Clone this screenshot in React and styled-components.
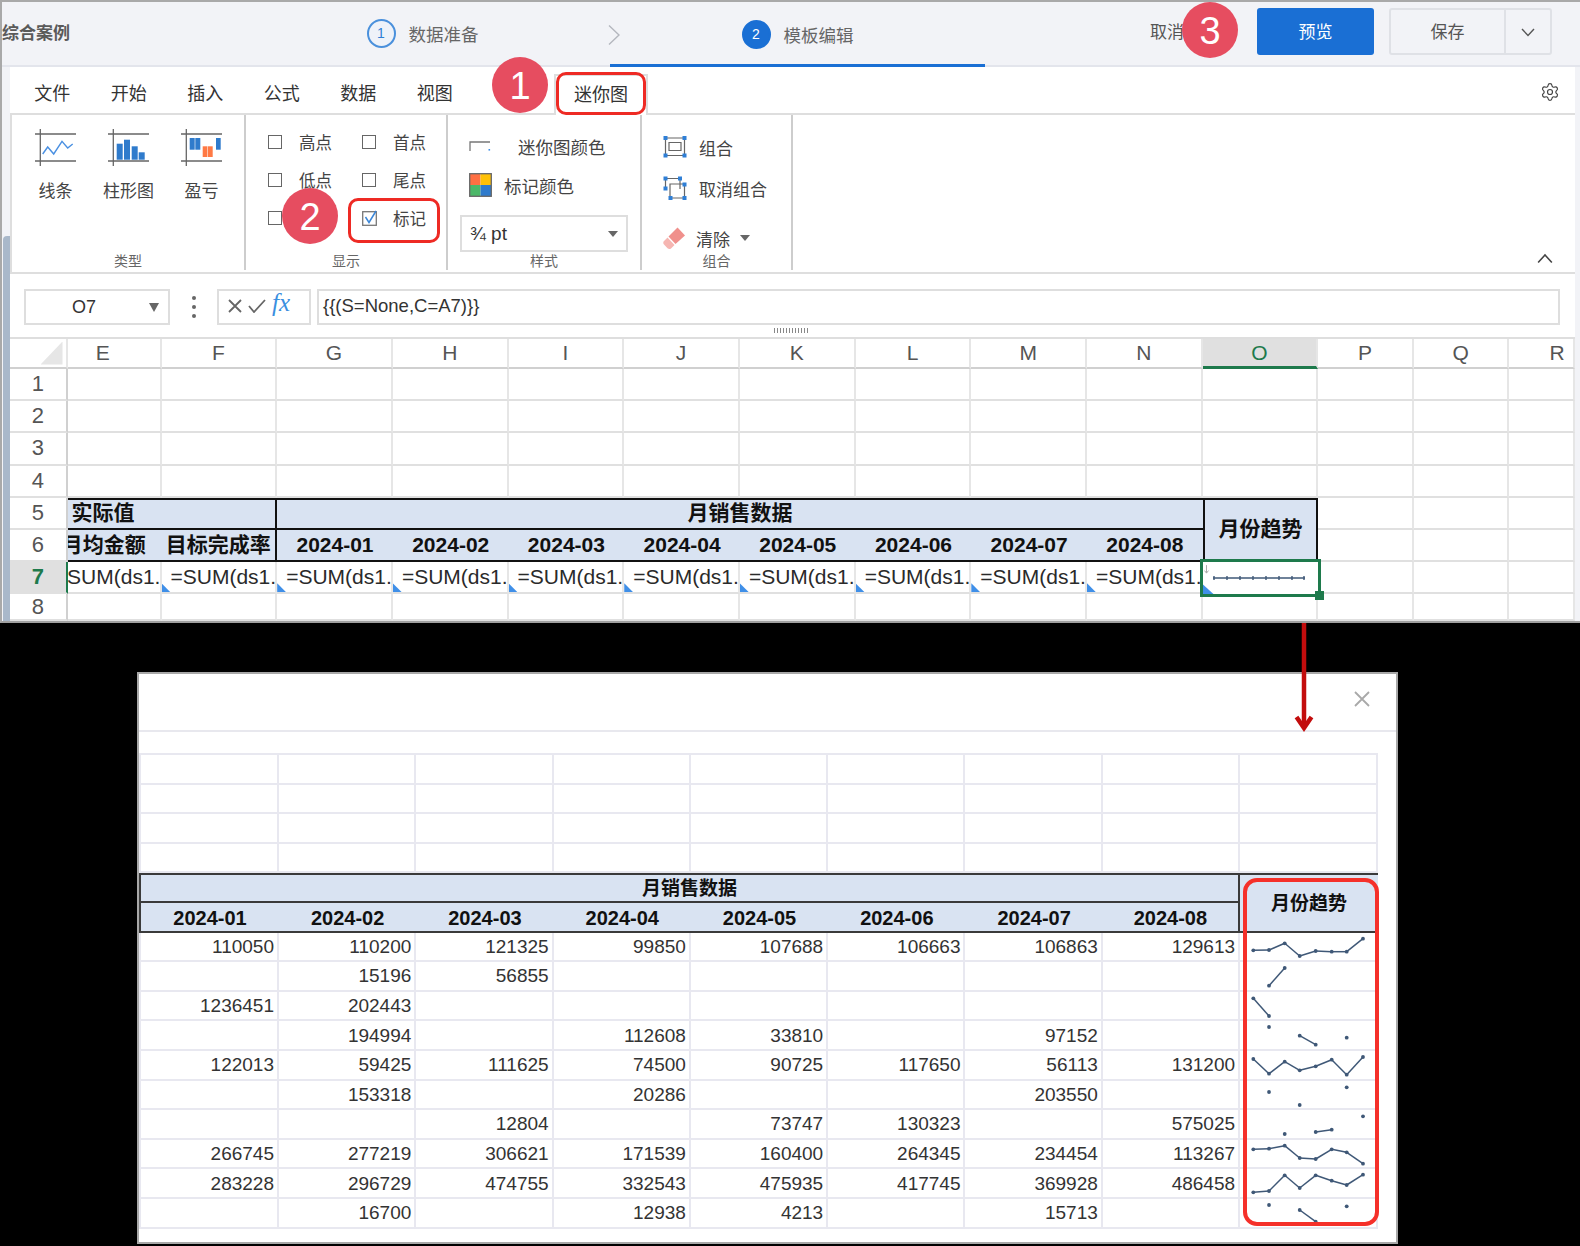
import React from 'react'
import styled, { createGlobalStyle } from 'styled-components'
import { Settings } from 'lucide-react'

const GlobalStyle = createGlobalStyle`
  html, body {
    margin: 0;
    padding: 0;
    background: #000;
  }
  * {
    box-sizing: border-box;
  }
  body {
    font-family: 'Liberation Sans', 'Noto Sans CJK SC', sans-serif;
  }
`

const Screen = styled.div`
  position: relative;
  width: 1580px;
  height: 1246px;
  background: #000;
  overflow: hidden;
  display: flex;
  flex-direction: column;
`

const Editor = styled.div`
  height: 623px;
  flex: none;
  display: flex;
  flex-direction: column;
  background: #f2f3f7;
  border-top: 2px solid #a9a9a9;
  border-left: 2px solid #a9a9a9;
  border-bottom: 2px solid #a0a0a0;
`

/* page header with the wizard steps */
const Header = styled.div`
  height: 65px;
  flex: none;
  display: flex;
  border-bottom: 2px solid #e3e5ec;
`
const Title = styled.div`
  width: 233px;
  flex: none;
  padding-top: 17px;
  font-size: 17px;
  font-weight: 700;
  color: #5a5a5a;
  white-space: nowrap;
`
const Step = styled.div`
  width: 375px;
  flex: none;
  display: flex;
  align-items: center;
  justify-content: center;
  gap: 13px;
  padding-top: 2px;
  margin-bottom: ${p => (p.$active ? '-2px' : '0')};
  border-bottom: 3px solid ${p => (p.$active ? '#1a6fd4' : 'transparent')};
  font-size: 17.5px;
  color: #666;
`
const StepNum = styled.span`
  width: 29px;
  height: 29px;
  border-radius: 50%;
  display: flex;
  align-items: center;
  justify-content: center;
  font-size: 14px;
  color: ${p => (p.$active ? '#fff' : '#2f7fd6')};
  background: ${p => (p.$active ? '#1a6fd4' : '#eef2f9')};
  border: 2px solid ${p => (p.$active ? '#1a6fd4' : '#4a90dc')};
`
const StepArrow = styled.svg`
  flex: none;
  width: 12px;
  height: 20px;
  margin: 23px -10px 0 -2px;
  fill: none;
  stroke: #b4b7be;
  stroke-width: 1.4;
`
const Actions = styled.div`
  margin-left: auto;
  margin-right: 28px;
  margin-top: 6px;
  display: flex;
  align-items: flex-start;
`
const CancelLink = styled.span`
  margin-top: 10px;
  margin-right: 73px;
  font-size: 17px;
  color: #555;
`
const PreviewButton = styled.button`
  width: 117px;
  height: 47px;
  margin-right: 15px;
  padding: 0 0 2px;
  border: 0;
  border-radius: 3px;
  background: #1a6fd4;
  color: #fff;
  font: inherit;
  font-size: 17px;
`
const SaveButton = styled.div`
  width: 163px;
  height: 47px;
  display: flex;
  border: 2px solid #dfe1e6;
  border-radius: 3px;
  font-size: 17px;
  color: #555;
`
const SaveLabel = styled.span`
  width: 115px;
  display: flex;
  align-items: center;
  justify-content: center;
  padding-bottom: 2px;
  border-right: 2px solid #dfe1e6;
`
const SaveCaret = styled.span`
  flex: 1;
  display: flex;
  align-items: center;
  justify-content: center;
`

/* ribbon */
const Workspace = styled.div`
  flex: 1;
  min-height: 0;
  display: flex;
  padding-right: 5px;
`
const LeftRail = styled.div`
  width: 8px;
  flex: none;
  padding-top: 169px;
`
const RailThumb = styled.div`
  height: 100%;
  margin-left: 1px;
  background: #a9b8ca;
  border-radius: 4px 0 0 0;
`
const Content = styled.div`
  flex: 1;
  min-width: 0;
  display: flex;
  flex-direction: column;
  background: #fff;
`
const TabRow = styled.div`
  height: 48px;
  flex: none;
  display: flex;
  align-items: center;
  padding: 3px 15px 0 4px;
  border-bottom: 2px solid #dedede;
`
const Tab = styled.span`
  width: 76.5px;
  text-align: center;
  font-size: 18px;
  color: #333;
`
const ActiveTab = styled.span`
  align-self: flex-end;
  width: 94px;
  height: 41px;
  margin-left: 81px;
  margin-bottom: -2px;
  padding-top: 4px;
  text-align: center;
  font-size: 18px;
  color: #333;
  background: #fff;
  border: 2px solid #dedede;
  border-bottom: 0;
`
const GearWrap = styled.span`
  margin-left: auto;
  display: flex;
  color: #444;
`
const RibbonBody = styled.div`
  height: 159px;
  flex: none;
  display: flex;
  border-left: 2px solid #dedede;
  border-bottom: 2px solid #dedede;
`
const Group = styled.div`
  width: ${p => p.$w}px;
  height: 155px;
  flex: none;
  display: flex;
  flex-direction: column;
  border-right: 2px solid #cdcdcd;
`
const GroupBody = styled.div`
  flex: 1;
  min-height: 0;
`
const GroupLabel = styled.div`
  height: 20px;
  flex: none;
  text-align: center;
  font-size: 14px;
  line-height: 22px;
  color: #666;
`
const ChartTypes = styled(GroupBody)`
  display: flex;
  padding: 14px 0 0 7px;
`
const ChartType = styled.div`
  width: 73px;
  display: flex;
  flex-direction: column;
  align-items: center;
  gap: 14px;
  font-size: 17px;
  line-height: 22px;
  color: #444;
`
const ChartIcon = styled.svg`
  width: 42px;
  height: 38px;
  fill: none;
`
const CheckGrid = styled(GroupBody)`
  display: grid;
  grid-template-columns: 94px 94px;
  grid-auto-rows: 38px;
  padding: 8px 0 0 22px;
`
const CheckItem = styled.label`
  display: flex;
  align-items: center;
  gap: 17px;
  font-size: 16.5px;
  color: #444;
`
const Box = styled.span`
  width: 14px;
  height: 14px;
  flex: none;
  border: 1.5px solid #666;
`
const TickBox = styled.svg`
  width: 18px;
  height: 16px;
  flex: none;
  margin-right: -4px;
  fill: none;
`
const StyleBody = styled(GroupBody)`
  padding-top: 19px;
  font-size: 17.5px;
  color: #444;
`
const StyleRow = styled.div`
  height: 24px;
  display: flex;
  align-items: center;
  gap: ${p => p.$gap}px;
  padding-left: 21px;
  margin-bottom: 15px;
`
const StyleSelect = styled.div`
  width: 168px;
  height: 37px;
  margin: 18px 0 0 12px;
  display: flex;
  align-items: center;
  justify-content: space-between;
  padding: 0 8px;
  background: #fff;
  border: 2px solid #dedede;
  font-size: 19px;
  color: #333;
`
const Caret = styled.span`
  flex: none;
  width: 0;
  height: 0;
  border-left: ${p => p.$w || 5}px solid transparent;
  border-right: ${p => p.$w || 5}px solid transparent;
  border-top: ${p => p.$h || 6}px solid #666;
`
const ComboBody = styled(GroupBody)`
  padding: 20px 0 0 21px;
  font-size: 17px;
  color: #444;
`
const ComboRow = styled.div`
  height: 24px;
  display: flex;
  align-items: center;
  gap: 12px;
  margin-bottom: ${p => p.$mb}px;
`
const ClearRow = styled(ComboRow)`
  margin-top: 26px;
  margin-left: -1px;
  gap: 10px;
`
const ComboIcon = styled.svg`
  width: 24px;
  height: 24px;
  flex: none;
  fill: none;
`
const Collapse = styled.div`
  flex: 1;
  display: flex;
  align-items: flex-end;
  justify-content: flex-end;
  padding: 0 22px 5px 0;
`

/* formula bar */
const FormulaBar = styled.div`
  height: 65px;
  flex: none;
  padding: 15px 15px 0 14px;
  border-bottom: 2px solid #dedede;
`
const FormulaRow = styled.div`
  height: 36px;
  display: flex;
  align-items: stretch;
`
const NameBox = styled.div`
  width: 146px;
  flex: none;
  display: flex;
  align-items: center;
  padding: 0 9px 0 46px;
  justify-content: space-between;
  border: 2px solid #dedede;
  font-size: 18px;
  color: #333;
`
const DotsHandle = styled.div`
  width: 47px;
  flex: none;
  display: flex;
  flex-direction: column;
  align-items: center;
  justify-content: center;
  gap: 5px;
`
const Dot = styled.span`
  width: 4px;
  height: 4px;
  border-radius: 50%;
  background: #666;
`
const FxBox = styled.div`
  width: 94px;
  flex: none;
  margin-right: 6px;
  display: flex;
  align-items: center;
  gap: 6px;
  padding: 0 0 3px 9px;
  border: 2px solid #dedede;
`
const FxGlyph = styled.span`
  font-family: 'Liberation Serif', serif;
  font-style: italic;
  font-size: 25px;
  line-height: 1;
  margin-top: -6px;
  color: #3a8fe0;
`
const FormulaInput = styled.div`
  flex: 1;
  display: flex;
  align-items: center;
  padding: 0 0 2px 4px;
  border: 2px solid #dedede;
  font-size: 18.5px;
  color: #333;
`
const Grip = styled.div`
  width: 36px;
  height: 5px;
  margin: 3px auto 0;
  background: repeating-linear-gradient(90deg, #888 0 1.5px, transparent 1.5px 3px);
`

/* top spreadsheet */
const Sheet = styled.div`
  flex: 1;
  min-height: 0;
  display: grid;
  grid-template-columns: 57.5px 94px repeat(10, 115.7px) 95.5px 95.5px 1fr;
  grid-template-rows: 30px repeat(7, 32.2px) 1fr;
  overflow: hidden;
`
const Cell = styled.div`
  min-width: 0;
  position: relative;
  display: flex;
  align-items: center;
  overflow: hidden;
  white-space: nowrap;
  border-right: 2px solid #e6e6e6;
  border-bottom: 2px solid #e0e0e0;
  font-size: 21px;
  color: #2a2a2a;
`
const ColHead = styled(Cell)`
  justify-content: center;
  font-size: 21px;
  color: ${p => (p.$on ? '#1e7a4c' : '#555')};
  background: ${p => (p.$on ? '#e0e0e0' : '#fff')};
  border-bottom: ${p => (p.$on ? '3px solid #1e7a4c' : '2px solid #d0d0d0')};
`
const CornerCell = styled(ColHead)`
  justify-content: flex-end;
  padding-right: 3px;
  &::after {
    content: '';
    width: 22px;
    height: 23px;
    background: #e6e6e6;
    clip-path: polygon(100% 0, 100% 100%, 0 100%);
  }
`
const RowHead = styled(Cell)`
  justify-content: center;
  font-size: 22px;
  font-weight: ${p => (p.$on ? 700 : 400)};
  color: ${p => (p.$on ? '#1e7a4c' : '#555')};
  background: ${p => (p.$on ? '#e0e0e0' : '#fff')};
  border-right: 2px solid ${p => (p.$on ? '#1e7a4c' : '#d0d0d0')};
`
const HeadCell = styled(Cell)`
  justify-content: ${p => (p.$left ? 'flex-start' : 'center')};
  padding-left: ${p => (p.$left ? '4px' : '0')};
  padding-bottom: ${p => p.$lift || 0}px;
  grid-column: span ${p => p.$span || 1};
  grid-row: span ${p => p.$rows || 1};
  background: #d9e3f2;
  font-weight: 700;
  color: #111;
  border-top: ${p => (p.$top ? '2px solid #111' : '0')};
  border-bottom: 2px solid #111;
  border-right: ${p => (p.$edge ? '2px solid #111' : '0')};
`
const TrendHead = styled(HeadCell)`
  border-left: 2px solid #111;
`
const ClippedText = styled.span`
  flex: none;
  width: 115.7px;
  margin-left: -21.7px;
  padding-left: ${p => (p.$left ? '9px' : '0')};
  text-align: ${p => (p.$left ? 'left' : 'center')};
`
const LastColLabel = styled.span`
  flex: none;
  width: 95.5px;
  text-align: center;
`
const LastColHead = styled(ColHead)`
  justify-content: flex-start;
`
const FormulaCell = styled(Cell)`
  padding-left: 9px;
  &::after {
    content: '';
    position: absolute;
    left: 0;
    bottom: 0;
    width: 9px;
    height: 9px;
    background: #3f8fe8;
    clip-path: polygon(0 0, 100% 100%, 0 100%);
  }
`
const SelectedCell = styled.div`
  position: relative;
  z-index: 2;
`
const Selection = styled.div`
  position: absolute;
  top: -3px;
  left: -3px;
  right: -3px;
  bottom: -3px;
  border: 3px solid #1e7a4c;
  &::after {
    content: '';
    position: absolute;
    right: -6px;
    bottom: -6px;
    width: 9px;
    height: 9px;
    background: #1e7a4c;
  }
  &::before {
    content: '';
    position: absolute;
    left: 0;
    bottom: 0;
    width: 11px;
    height: 10px;
    background: #3f8fe8;
    clip-path: polygon(0 0, 100% 100%, 0 100%);
  }
`
const SelectionSpark = styled.svg`
  display: block;
  width: 100%;
  height: 100%;
  fill: none;
`

/* preview dialog on the black backdrop */
const Backdrop = styled.div`
  flex: 1;
  min-height: 0;
  padding: 49px 0 0 137px;
`
const Dialog = styled.div`
  width: 1261px;
  height: 572px;
  background: #fff;
  border: 2px solid #a8a8a8;
`
const DialogHead = styled.div`
  height: 58px;
  display: flex;
  align-items: center;
  justify-content: flex-end;
  padding: 0 26px 6px 0;
  border-bottom: 2px solid #e8e8ee;
`
const CloseIcon = styled.svg`
  width: 16px;
  height: 16px;
  fill: none;
  stroke: #a9a9a9;
  stroke-width: 1.8;
`
const PreviewGrid = styled.div`
  position: relative;
  width: 1239px;
  margin-top: 21px;
  border-top: 2px solid #e8e8f0;
  display: grid;
  grid-template-columns: 140px repeat(7, 137.3px) 138px;
  grid-auto-rows: 29.6px;
`
const PCell = styled.div`
  min-width: 0;
  display: flex;
  align-items: center;
  justify-content: flex-end;
  padding: 1px 3px 0 0;
  white-space: nowrap;
  overflow: hidden;
  border-right: 2px solid #e8e8f0;
  border-bottom: 2px solid #e8e8f0;
  border-left: ${p => (p.$first ? '2px solid #e8e8f0' : '0')};
  font-size: 19px;
  color: #333;
`
const SparkCell = styled(PCell)`
  padding: 0;
  align-items: flex-start;
  justify-content: flex-start;
`
const PHead = styled.div`
  grid-column: span ${p => p.$span || 1};
  grid-row: span ${p => p.$rows || 1};
  display: flex;
  align-items: center;
  justify-content: center;
  background: #d9e3f2;
  padding-top: ${p => (p.$date ? 3 : 0)}px;
  padding-bottom: ${p => (p.$lift ? p.$lift : 0)}px;
  font-size: ${p => (p.$date ? 20 : 19)}px;
  font-weight: 700;
  color: #111;
  border-top: ${p => (p.$top ? '2px solid #3a3a3a' : '0')};
  border-bottom: 2px solid #3a3a3a;
  border-left: ${p => (p.$first ? '2px solid #3a3a3a' : '0')};
  border-right: ${p => (p.$edge ? '2px solid #3a3a3a' : '0')};
`
const Spark = styled.svg`
  display: block;
  flex: none;
  width: 136px;
  height: 27.6px;
`

/* annotations laid over the screenshot */
const Badge = styled.div`
  position: absolute;
  left: ${p => p.$x - 28}px;
  top: ${p => p.$y - 28}px;
  width: 56px;
  height: 56px;
  z-index: 5;
  padding-top: 2px;
  border-radius: 50%;
  display: flex;
  align-items: center;
  justify-content: center;
  background: #e64d60;
  color: #fff;
  font-size: 38px;
`
const RedBox = styled.div`
  position: absolute;
  left: ${p => p.$x}px;
  top: ${p => p.$y}px;
  width: ${p => p.$w}px;
  height: ${p => p.$h}px;
  z-index: 4;
  border: 3.5px solid #ee2a24;
  border-radius: 10px;
`
const TrendBox = styled.div`
  position: absolute;
  left: 1104px;
  top: 123px;
  width: 136px;
  height: 348px;
  border: 4px solid #f5302a;
  border-radius: 14px;
`
const FlowArrow = styled.svg`
  position: absolute;
  left: 1294px;
  top: 623px;
  width: 20px;
  height: 110px;
  z-index: 4;
  fill: none;
  stroke: #c30d0d;
  stroke-width: 4.5;
`

const COLS = ['E', 'F', 'G', 'H', 'I', 'J', 'K', 'L', 'M', 'N', 'O', 'P', 'Q', 'R']
const MONTHS = ['2024-01', '2024-02', '2024-03', '2024-04', '2024-05', '2024-06', '2024-07', '2024-08']

const ROWS = [
  [110050, 110200, 121325, 99850, 107688, 106663, 106863, 129613],
  [null, 15196, 56855, null, null, null, null, null],
  [1236451, 202443, null, null, null, null, null, null],
  [null, 194994, null, 112608, 33810, null, 97152, null],
  [122013, 59425, 111625, 74500, 90725, 117650, 56113, 131200],
  [null, 153318, null, 20286, null, null, 203550, null],
  [null, null, 12804, null, 73747, 130323, null, 575025],
  [266745, 277219, 306621, 171539, 160400, 264345, 234454, 113267],
  [283228, 296729, 474755, 332543, 475935, 417745, 369928, 486458],
  [null, 16700, null, 12938, 4213, null, 15713, null],
]

// marker heights inside each row, measured per month
const SPARKS = [
  [17.3, 17, 10.3, 23, 18, 18.7, 18.7, 5.7],
  [null, 23.7, 6, null, null, null, null, null],
  [6.3, 24, null, null, null, null, null, null],
  [null, 6, null, 14.7, 23.7, null, 16.7, null],
  [8, 22.7, 10.7, 19.3, 15.3, 8.7, 23.7, 6],
  [null, 11, null, 24, null, null, 6.3, null],
  [null, null, 24, null, 22, 19.7, null, 6.3],
  [9.3, 8.7, 5.7, 18, 19, 9.3, 12.3, 23.7],
  [23.3, 22, 6.3, 19, 6.3, 11.7, 16, 5.7],
  [null, 6, null, 11, 22.7, null, 7.3, null],
]
const SPARK_X = [13.3, 29, 44.7, 59.7, 75.7, 91.7, 106.7, 123]

const Sparkline = ({ values }) => {
  const lines = []
  values.forEach((v, i) => {
    if (i > 0 && v !== null && values[i - 1] !== null) {
      lines.push(
        <line key={i} x1={SPARK_X[i - 1]} y1={values[i - 1]} x2={SPARK_X[i]} y2={v} stroke="#3f5877" strokeWidth="1.5" />
      )
    }
  })
  return (
    <Spark viewBox="0 0 136 27.6">
      {lines}
      {values.map((v, i) => (v === null ? null : <circle key={i} cx={SPARK_X[i]} cy={v} r="1.9" fill="#3f5877" />))}
    </Spark>
  )
}

const Axes = () => (
  <g stroke="#666" strokeWidth="1.3">
    <path d="M0 5H41M0 32H41M5.3 0V37" />
  </g>
)

const LineIcon = () => (
  <ChartIcon viewBox="0 0 42 38">
    <Axes />
    <polyline points="7.7,25 12.7,18 18.7,25 27,12.3 32.7,19 37.7,15" stroke="#4a90e2" strokeWidth="1.4" />
  </ChartIcon>
)

const BarIcon = () => (
  <ChartIcon viewBox="0 0 42 38">
    <Axes />
    <g fill="#2f7bcc">
      <rect x="8.7" y="14.7" width="6" height="16" />
      <rect x="16" y="10.7" width="6" height="20" />
      <rect x="23.7" y="17.3" width="6" height="13.4" />
      <rect x="30.7" y="23.3" width="6" height="7.4" />
    </g>
  </ChartIcon>
)

const WinLossIcon = () => (
  <ChartIcon viewBox="0 0 42 38">
    <Axes />
    <g fill="#2f7bcc">
      <rect x="8.7" y="9" width="5" height="11.7" />
      <rect x="14.3" y="9" width="5" height="11.7" />
      <rect x="35" y="9" width="4.7" height="11.7" />
    </g>
    <g fill="#ff7a45">
      <rect x="21.7" y="17.3" width="4.5" height="10.7" />
      <rect x="26.7" y="17.3" width="5" height="10.7" />
    </g>
  </ChartIcon>
)

const SparkColorIcon = () => (
  <svg width="23" height="12" viewBox="0 0 23 12" fill="none">
    <path d="M1 11V2H21" stroke="#777" strokeWidth="1.3" />
    <rect x="19.5" y="9" width="1.6" height="1.6" fill="#3f8fe8" />
  </svg>
)

const MarkColorIcon = () => (
  <svg width="23" height="24" viewBox="0 0 23 24">
    <rect x="1" y="1" width="10.5" height="11" fill="#ff7043" />
    <rect x="11.5" y="1" width="10.5" height="11" fill="#ffc107" />
    <rect x="1" y="12" width="10.5" height="11" fill="#4cb869" />
    <rect x="11.5" y="12" width="10.5" height="11" fill="#2f7bcc" />
    <rect x="0.7" y="0.7" width="21.6" height="22.6" fill="none" stroke="#666" strokeWidth="1.3" />
  </svg>
)

const GroupIcon = () => (
  <ComboIcon viewBox="0 0 24 24">
    <path d="M2.5 3H21.5V20.5H2.5Z M6 7.5H18V15.5H6Z" stroke="#666" strokeWidth="1.2" />
    <g fill="#2f7fd6">
      <rect x="0.5" y="1" width="4" height="4" />
      <rect x="19.5" y="1" width="4" height="4" />
      <rect x="0.5" y="18.5" width="4" height="4" />
      <rect x="19.5" y="18.5" width="4" height="4" />
    </g>
  </ComboIcon>
)

const UngroupIcon = () => (
  <ComboIcon viewBox="0 0 24 24">
    <path d="M2.5 2.5H17V13 M2.5 2.5V13 M7 8H21.5V22H7Z" stroke="#666" strokeWidth="1.2" />
    <g fill="#2f7fd6">
      <rect x="0.5" y="0.5" width="4" height="4" />
      <rect x="15" y="0.5" width="4" height="4" />
      <rect x="0.5" y="10.5" width="4" height="4" />
      <rect x="19.5" y="6.5" width="4" height="4" />
      <rect x="5.5" y="20" width="4" height="4" />
      <rect x="19.5" y="20" width="4" height="4" />
    </g>
  </ComboIcon>
)

const EraserIcon = () => (
  <ComboIcon viewBox="0 0 24 24">
    <path d="M15.5 1.5L23 9.5L13.5 18L6.5 10.5Z" fill="#f0908c" />
    <path d="M5.5 11.5L12.5 19L9 22.5C8 23.3 6.5 23.3 5.5 22.3L2 18.5C1 17.5 1 16 2 15Z" fill="#f6b6b2" />
  </ComboIcon>
)

const CheckItemEl = ({ children }) => (
  <CheckItem>
    <Box />
    {children}
  </CheckItem>
)

const SmallChevron = ({ up, size = 14, color = '#555' }) => (
  <svg width={size} height={size} viewBox="0 0 14 14" fill="none" stroke={color} strokeWidth="1.4">
    <path d={up ? 'M1 10L7 3.5L13 10' : 'M1 4L7 10.5L13 4'} />
  </svg>
)

const Ribbon = () => (
  <RibbonBody>
    <Group $w={234}>
      <ChartTypes>
        <ChartType><LineIcon />线条</ChartType>
        <ChartType><BarIcon />柱形图</ChartType>
        <ChartType><WinLossIcon />盈亏</ChartType>
      </ChartTypes>
      <GroupLabel>类型</GroupLabel>
    </Group>
    <Group $w={202}>
      <CheckGrid>
        <CheckItemEl>高点</CheckItemEl>
        <CheckItemEl>首点</CheckItemEl>
        <CheckItemEl>低点</CheckItemEl>
        <CheckItemEl>尾点</CheckItemEl>
        <CheckItemEl />
        <CheckItem>
          <TickBox viewBox="0 0 18 16">
            <rect x="0.7" y="1.7" width="13.6" height="13.6" stroke="#777" strokeWidth="1.3" />
            <path d="M3.5 7L7 12.5L14 1" stroke="#3b86d8" strokeWidth="1.5" />
          </TickBox>
          标记
        </CheckItem>
      </CheckGrid>
      <GroupLabel>显示</GroupLabel>
    </Group>
    <Group $w={194}>
      <StyleBody>
        <StyleRow $gap={26}><SparkColorIcon />迷你图颜色</StyleRow>
        <StyleRow $gap={12}><MarkColorIcon />标记颜色</StyleRow>
        <StyleSelect>¾ pt<Caret /></StyleSelect>
      </StyleBody>
      <GroupLabel>样式</GroupLabel>
    </Group>
    <Group $w={151}>
      <ComboBody>
        <ComboRow $mb={17}><GroupIcon />组合</ComboRow>
        <ComboRow $mb={0}><UngroupIcon />取消组合</ComboRow>
        <ClearRow $mb={0}><EraserIcon />清除<Caret /></ClearRow>
      </ComboBody>
      <GroupLabel>组合</GroupLabel>
    </Group>
    <Collapse><SmallChevron up size={16} color="#444" /></Collapse>
  </RibbonBody>
)

const Formula = () => (
  <FormulaBar>
    <FormulaRow>
      <NameBox>O7<Caret $h={9} /></NameBox>
      <DotsHandle><Dot /><Dot /><Dot /></DotsHandle>
      <FxBox>
        <svg width="14" height="14" viewBox="0 0 14 14" fill="none" stroke="#666" strokeWidth="1.8">
          <path d="M1 1L13 13M13 1L1 13" />
        </svg>
        <svg width="18" height="14" viewBox="0 0 18 14" fill="none" stroke="#666" strokeWidth="1.8">
          <path d="M1 7L6 13L17 1" />
        </svg>
        <FxGlyph>fx</FxGlyph>
      </FxBox>
      <FormulaInput>{'{{(S=None,C=A7)}}'}</FormulaInput>
    </FormulaRow>
    <Grip />
  </FormulaBar>
)

const SheetView = () => (
  <Sheet>
    <CornerCell />
    {COLS.map(c => {
      if (c === 'E') return <ColHead key={c}><ClippedText>{c}</ClippedText></ColHead>
      if (c === 'R') return <LastColHead key={c}><LastColLabel>{c}</LastColLabel></LastColHead>
      return <ColHead key={c} $on={c === 'O'}>{c}</ColHead>
    })}
    {[1, 2, 3, 4].map(n => (
      <React.Fragment key={n}>
        <RowHead>{n}</RowHead>
        {COLS.map(c => <Cell key={c} />)}
      </React.Fragment>
    ))}
    <RowHead>5</RowHead>
    <HeadCell $span={2} $left $top $edge $lift={6}>实际值</HeadCell>
    <HeadCell $span={8} $top $lift={6}>月销售数据</HeadCell>
    <TrendHead $rows={2} $top $edge $lift={6}>月份趋势</TrendHead>
    <Cell /><Cell /><Cell />
    <RowHead>6</RowHead>
    <HeadCell $lift={4}><ClippedText>月均金额</ClippedText></HeadCell>
    <HeadCell $edge $lift={4}>目标完成率</HeadCell>
    {MONTHS.map(m => <HeadCell key={m}>{m}</HeadCell>)}
    <Cell /><Cell /><Cell />
    <RowHead $on>7</RowHead>
    <Cell><ClippedText $left>=SUM(ds1.</ClippedText></Cell>
    {COLS.slice(1, 10).map(c => <FormulaCell key={c}>=SUM(ds1.</FormulaCell>)}
    <SelectedCell>
      <Selection>
        <SelectionSpark viewBox="0 0 115.7 32">
          <path d="M3.5 3V11M1.5 8.5L3.5 11L5.5 8.5" stroke="#aaa" strokeWidth="1" />
          <path d="M10 15.8H102" stroke="#3f5877" strokeWidth="1.5" />
          <path d="M11 13.8V17.8M24 13.8V17.8M37 13.8V17.8M50 13.8V17.8M63 13.8V17.8M76 13.8V17.8M89 13.8V17.8M101 13.8V17.8" stroke="#3f5877" strokeWidth="1.4" />
        </SelectionSpark>
      </Selection>
    </SelectedCell>
    <Cell /><Cell /><Cell />
    <RowHead>8</RowHead>
    {COLS.map(c => <Cell key={c} />)}
  </Sheet>
)

const PreviewTable = () => (
  <PreviewGrid>
    {[0, 1, 2, 3].map(r => (
      <React.Fragment key={r}>
        {Array.from({ length: 9 }, (_, i) => <PCell key={i} $first={i === 0} />)}
      </React.Fragment>
    ))}
    <PHead $span={8} $top $first $edge $lift={3}>月销售数据</PHead>
    <PHead $rows={2} $top $lift={2}>月份趋势</PHead>
    {MONTHS.map((m, i) => (
      <PHead key={m} $date $first={i === 0} $edge={i === 7}>{m}</PHead>
    ))}
    {ROWS.map((row, r) => (
      <React.Fragment key={r}>
        {row.map((v, i) => <PCell key={i} $first={i === 0}>{v}</PCell>)}
        <SparkCell><Sparkline values={SPARKS[r]} /></SparkCell>
      </React.Fragment>
    ))}
    <TrendBox />
  </PreviewGrid>
)

const App = () => (
  <Screen>
    <GlobalStyle />
    <Editor>
      <Header>
        <Title>综合案例</Title>
        <Step><StepNum>1</StepNum>数据准备</Step>
        <StepArrow viewBox="0 0 12 20"><path d="M1 0.5L11 10L1 19.5" /></StepArrow>
        <Step $active><StepNum $active>2</StepNum>模板编辑</Step>
        <Actions>
          <CancelLink>取消</CancelLink>
          <PreviewButton>预览</PreviewButton>
          <SaveButton>
            <SaveLabel>保存</SaveLabel>
            <SaveCaret><SmallChevron /></SaveCaret>
          </SaveButton>
        </Actions>
      </Header>
      <Workspace>
        <LeftRail><RailThumb /></LeftRail>
        <Content>
          <TabRow>
            {['文件', '开始', '插入', '公式', '数据', '视图'].map(t => <Tab key={t}>{t}</Tab>)}
            <ActiveTab>迷你图</ActiveTab>
            <GearWrap><Settings size={20} strokeWidth={1.4} /></GearWrap>
          </TabRow>
          <Ribbon />
          <Formula />
          <SheetView />
        </Content>
      </Workspace>
    </Editor>
    <Backdrop>
      <Dialog>
        <DialogHead>
          <CloseIcon viewBox="0 0 16 16"><path d="M1 1L15 15M15 1L1 15" /></CloseIcon>
        </DialogHead>
        <PreviewTable />
      </Dialog>
    </Backdrop>
    <Badge $x={520} $y={85}>1</Badge>
    <Badge $x={310} $y={216}>2</Badge>
    <Badge $x={1210} $y={30}>3</Badge>
    <RedBox $x={556} $y={72} $w={90} $h={43} />
    <RedBox $x={348} $y={198} $w={92} $h={45} />
    <FlowArrow viewBox="0 0 20 110">
      <path d="M10 0V104" />
      <path d="M2.5 94L10 105L17.5 94" />
    </FlowArrow>
  </Screen>
)

export default App
